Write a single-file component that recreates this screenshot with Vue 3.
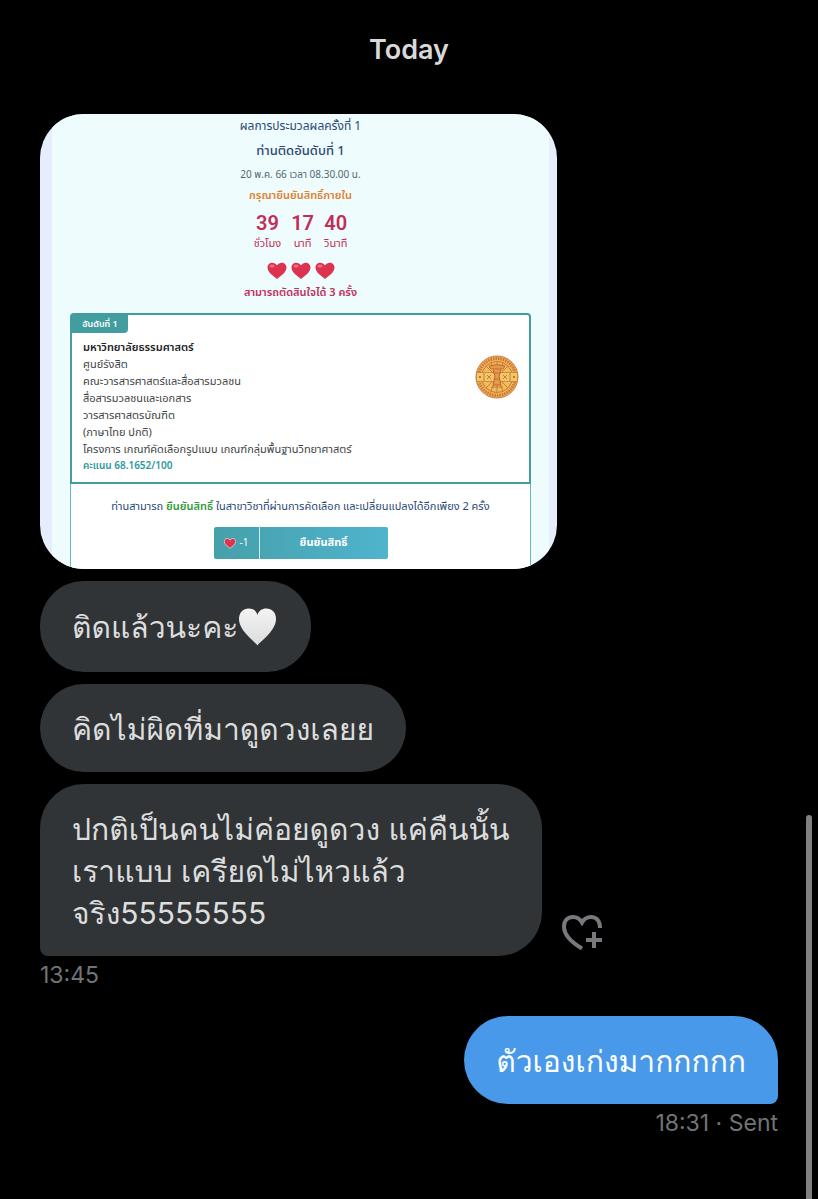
<template>
  <main class="chat">
    <h1 class="day">Today</h1>

    <!-- shared picture -->
    <section class="shot">
      <div class="panel">
        <p class="round">ผลการประมวลผลครั้งที่ 1</p>
        <p class="rank">ท่านติดอันดับที่ 1</p>
        <p class="date">20 พ.ค. 66 เวลา 08.30.00 น.</p>
        <p class="confirm-by">กรุณายืนยันสิทธิ์ภายใน</p>

        <div class="countdown">
          <div v-for="part in countdown" :key="part.label" class="part">
            <strong class="number">{{ part.value }}</strong>
            <span class="unit">{{ part.label }}</span>
          </div>
        </div>

        <div class="lives">
          <svg v-for="n in 3" :key="n" class="life" viewBox="0 0 20 18" aria-hidden="true">
            <path class="life-shape" d="M10 17C7 14.5 0.5 10.500 0.500 5.500C0.500 0 7.500-1 10 3.500C12.500-1 19.500 0 19.500 5.500C19.500 10.500 13 14.500 10 17Z" />
            <ellipse class="life-shine" cx="5" cy="4" rx="2.500" ry="1.500" />
          </svg>
        </div>
        <p class="chances">สามารถตัดสินใจได้ 3 ครั้ง</p>

        <div class="result">
          <div class="program">
            <span class="tag">อันดับที่ 1</span>
            <div class="program-row">
              <div class="details">
                <p class="university">มหาวิทยาลัยธรรมศาสตร์</p>
                <p v-for="line in details" :key="line">{{ line }}</p>
                <p class="score">คะแนน 68.1652/100</p>
              </div>
              <svg class="seal" viewBox="0 0 44 44" aria-hidden="true">
                <circle cx="22" cy="22" r="21" fill="#ecb655" stroke="#d07a3c" stroke-width="1" />
                <circle cx="22" cy="22" r="18.500" fill="none" stroke="#cd7440" stroke-width="3" stroke-dasharray="1.500 1" />
                <circle cx="22" cy="22" r="15.500" fill="#efbd55" stroke="#cd7440" stroke-width="1" />
                <path d="M22 22L11 11M22 22L33 11M22 22L11 33M22 22L33 33M22 22V7M22 22V37M22 22L16 8M22 22L28 8M22 22L16 36M22 22L28 36" stroke="#cf7c3e" stroke-width="1" />
                <path d="M1.500 17.500H42.500V26.500H1.500Z" fill="#efc765" stroke="#cd7c40" stroke-width="0.800" />
                <path d="M14 11Q22 8 30 11L28 14H16Z" fill="#e29b48" stroke="#c4633a" stroke-width="1" />
                <path d="M18 15L20 21L18 30H26L24 21L26 15" fill="#e29b48" stroke="#c4633a" stroke-width="1" />
                <path d="M18 18H26M19 24H25M16 32H28M9 18V26M35 18V26M12 20L16 24M32 20L28 24M12 24L16 20M32 24L28 20" stroke="#c4633a" stroke-width="0.800" />
                <circle cx="5" cy="22" r="1" fill="#b9532f" />
                <circle cx="39" cy="22" r="1" fill="#b9532f" />
              </svg>
            </div>
          </div>

          <div class="actions">
            <p class="hint">ท่านสามารถ <b>ยืนยันสิทธิ์</b> ในสาขาวิชาที่ผ่านการคัดเลือก และเปลี่ยนแปลงได้อีกเพียง 2 ครั้ง</p>
            <button type="button" class="confirm">
              <span class="cost">
                <svg class="cost-heart" viewBox="0 0 20 18" aria-hidden="true">
                  <path class="life-shape" stroke="#fff" stroke-width="1" d="M10 17C7 14.5 0.5 10.500 0.500 5.500C0.500 0 7.500-1 10 3.500C12.500-1 19.500 0 19.500 5.500C19.500 10.500 13 14.500 10 17Z" />
                </svg>
                -1
              </span>
              <span class="confirm-label">ยืนยันสิทธิ์</span>
            </button>
          </div>
        </div>
      </div>
    </section>

    <!-- received -->
    <p class="bubble with-heart">
      ติดแล้วนะคะ<svg class="white-heart" viewBox="0 0 38 38" role="img" aria-label="white heart">
        <defs>
          <linearGradient id="heartFill" x1="0" y1="0" x2="0" y2="1">
            <stop offset="0" stop-color="#f3f3f3" />
            <stop offset="1" stop-color="#dcdcdc" />
          </linearGradient>
        </defs>
        <path fill="url(#heartFill)" d="M19 37.500C17 34 0.500 23 0.500 11C0.500 4 5 0.500 10 0.500C15 0.500 18 3 19 7C20 3 23 0.500 28 0.500C33 0.500 37.500 4 37.500 11C37.500 23 21 34 19 37.500Z" />
      </svg>
    </p>
    <p class="bubble">คิดไม่ผิดที่มาดูดวงเลยย</p>
    <div class="last">
      <p class="bubble tail-left">{{ longMessage }}</p>
      <button type="button" class="react" aria-label="Add reaction">
        <svg viewBox="0 0 40 36" aria-hidden="true">
          <path d="M20 33.500C9 27 2 19.500 2 11.500C2 5.500 6 2 11 2C15 2 18 4 20 7.500C22 4 25 2 29 2C34.500 2 38 6 38 13" />
          <path d="M32 17V33M24 25H40" />
        </svg>
      </button>
    </div>
    <p class="time">13:45</p>

    <!-- sent -->
    <p class="bubble sent">ตัวเองเก่งมากกกกก</p>
    <p class="time sent-time">18:31 · Sent</p>

    <div class="scroll-thumb"></div>
  </main>
</template>

<script setup>
const countdown = [
  { value: '39', label: 'ชั่วโมง' },
  { value: '17', label: 'นาที' },
  { value: '40', label: 'วินาที' },
]

const details = [
  'ศูนย์รังสิต',
  'คณะวารสารศาสตร์และสื่อสารมวลชน',
  'สื่อสารมวลชนและเอกสาร',
  'วารสารศาสตรบัณฑิต',
  '(ภาษาไทย ปกติ)',
  'โครงการ เกณฑ์คัดเลือกรูปแบบ เกณฑ์กลุ่มพื้นฐานวิทยาศาสตร์',
]

const longMessage = 'ปกติเป็นคนไม่ค่อยดูดวง แค่คืนนั้น\nเราแบบ เครียดไม่ไหวแล้ว\nจริง55555555'
</script>

<style>
body {
  margin: 0;
  background: #000;
}
</style>

<style scoped>
.chat {
  display: flex;
  flex-direction: column;
  align-items: flex-start;
  box-sizing: border-box;
  min-height: 100vh;
  padding: 32px 40px;
  background: #000;
  font-family: Inter, 'Noto Sans Thai', 'Noto Sans', sans-serif;
}

p {
  margin: 0;
}

.day {
  align-self: center;
  margin: 0 0 46px;
  color: #d9d9d9;
  font-size: 27px;
  font-weight: 600;
  line-height: 36px;
}

.shot {
  box-sizing: border-box;
  width: 100%;
  max-width: 517px;
  padding: 0 8px 0 12px;
  overflow: hidden;
  border-radius: 44px;
  background: #e6edfd;
}

.panel {
  display: flex;
  flex-direction: column;
  align-items: center;
  padding: 1px 18px 0;
  background: #effcfd;
  color: #2b4874;
  font-family: 'Noto Sans Thai', 'Noto Sans', sans-serif;
  font-size: 11px;
}

.round {
  font-size: 12px;
  line-height: 22px;
}

.rank {
  font-size: 13px;
  font-weight: 500;
  line-height: 28px;
}

.date {
  color: #526874;
  font-size: 10px;
  line-height: 20px;
}

.confirm-by {
  color: #df812f;
  font-weight: 600;
  line-height: 22px;
}

.countdown {
  display: flex;
  gap: 10px;
  padding-top: 4px;
  color: #c22d59;
}

.part {
  display: flex;
  flex-direction: column;
  align-items: center;
}

.number {
  font-family: Roboto, sans-serif;
  font-size: 20px;
  font-weight: 600;
  line-height: 24px;
}

.unit {
  line-height: 18px;
}

.lives {
  display: flex;
  gap: 4px;
  margin-top: 9px;
}

.life {
  width: 20px;
  height: 18px;
}

.life-shape {
  fill: #dc3450;
}

.life-shine {
  fill: #ef7180;
}

.chances {
  margin: 2px 0 9px;
  color: #c22d59;
  font-weight: 600;
  line-height: 22px;
}

.result {
  align-self: stretch;
}

.program {
  box-sizing: border-box;
  min-height: 171px;
  border: 2px solid #419da0;
  border-radius: 4px 4px 0 0;
  background: #fff;
}

.tag {
  display: block;
  width: 56px;
  border-radius: 0 0 4px 0;
  background: #419da0;
  color: #fff;
  font-size: 9px;
  font-weight: 600;
  line-height: 18px;
  text-align: center;
}

.program-row {
  display: flex;
  justify-content: space-between;
  padding: 6px 10px 0 11px;
  color: #404446;
  line-height: 17px;
}

.university {
  color: #222;
  font-weight: 600;
}

.score {
  color: #2e989c;
  font-size: 10px;
  font-weight: 600;
}

.seal {
  width: 44px;
  height: 44px;
  margin-top: 16px;
}

.actions {
  display: flex;
  flex-direction: column;
  align-items: center;
  gap: 9px;
  padding: 12px 0 10px;
  border: solid #65b8ba;
  border-width: 0 1px;
  background: #fff;
}

.hint {
  line-height: 22px;
  white-space: nowrap;
}

.hint b {
  color: #309b36;
  font-weight: 600;
}

.confirm {
  display: flex;
  width: 174px;
  height: 32px;
  padding: 0;
  border: 0;
  border-radius: 2px;
  background: linear-gradient(90deg, #45a0aa, #50b4ce);
  color: #fff;
  font-family: inherit;
  font-size: 11px;
}

.cost {
  display: flex;
  align-items: center;
  justify-content: center;
  gap: 4px;
  width: 45px;
  border-right: 1px solid #d4edf0;
  font-size: 10px;
  line-height: 32px;
}

.cost-heart {
  width: 12px;
  height: 11px;
}

.confirm-label {
  flex: 1;
  font-weight: 700;
  line-height: 32px;
}

.bubble {
  margin-top: 12px;
  padding: 24px 32px 22px;
  border-radius: 44px;
  background: #313437;
  color: #dcdddd;
  font-family: Inter, Loma, Garuda, Waree, 'Noto Sans Thai Looped', sans-serif;
  font-size: 30px;
  line-height: 42px;
  white-space: pre-line;
}

.with-heart {
  display: flex;
  align-items: center;
  padding: 25px 34px 24px 32px;
}

.white-heart {
  width: 39px;
  height: 38px;
}

.last {
  display: flex;
  align-items: flex-end;
  gap: 20px;
}

.tail-left {
  border-bottom-left-radius: 8px;
}

.react {
  width: 40px;
  height: 36px;
  margin-bottom: 5px;
  padding: 0;
  border: 0;
  background: none;
}

.react svg {
  display: block;
  fill: none;
  stroke: #77797c;
  stroke-width: 4;
}

.time {
  margin-top: 4px;
  color: #717477;
  font-size: 23px;
  line-height: 30px;
}

.sent {
  align-self: flex-end;
  margin-top: 26px;
  border-bottom-right-radius: 8px;
  background: #4999eb;
  color: #fff;
}

.sent-time {
  align-self: flex-end;
}

/* scroll thumb lies over the conversation */
.scroll-thumb {
  position: fixed;
  top: 68%;
  right: 6px;
  bottom: 0;
  width: 6px;
  border-radius: 3px 3px 0 0;
  background: #808080;
}
</style>
